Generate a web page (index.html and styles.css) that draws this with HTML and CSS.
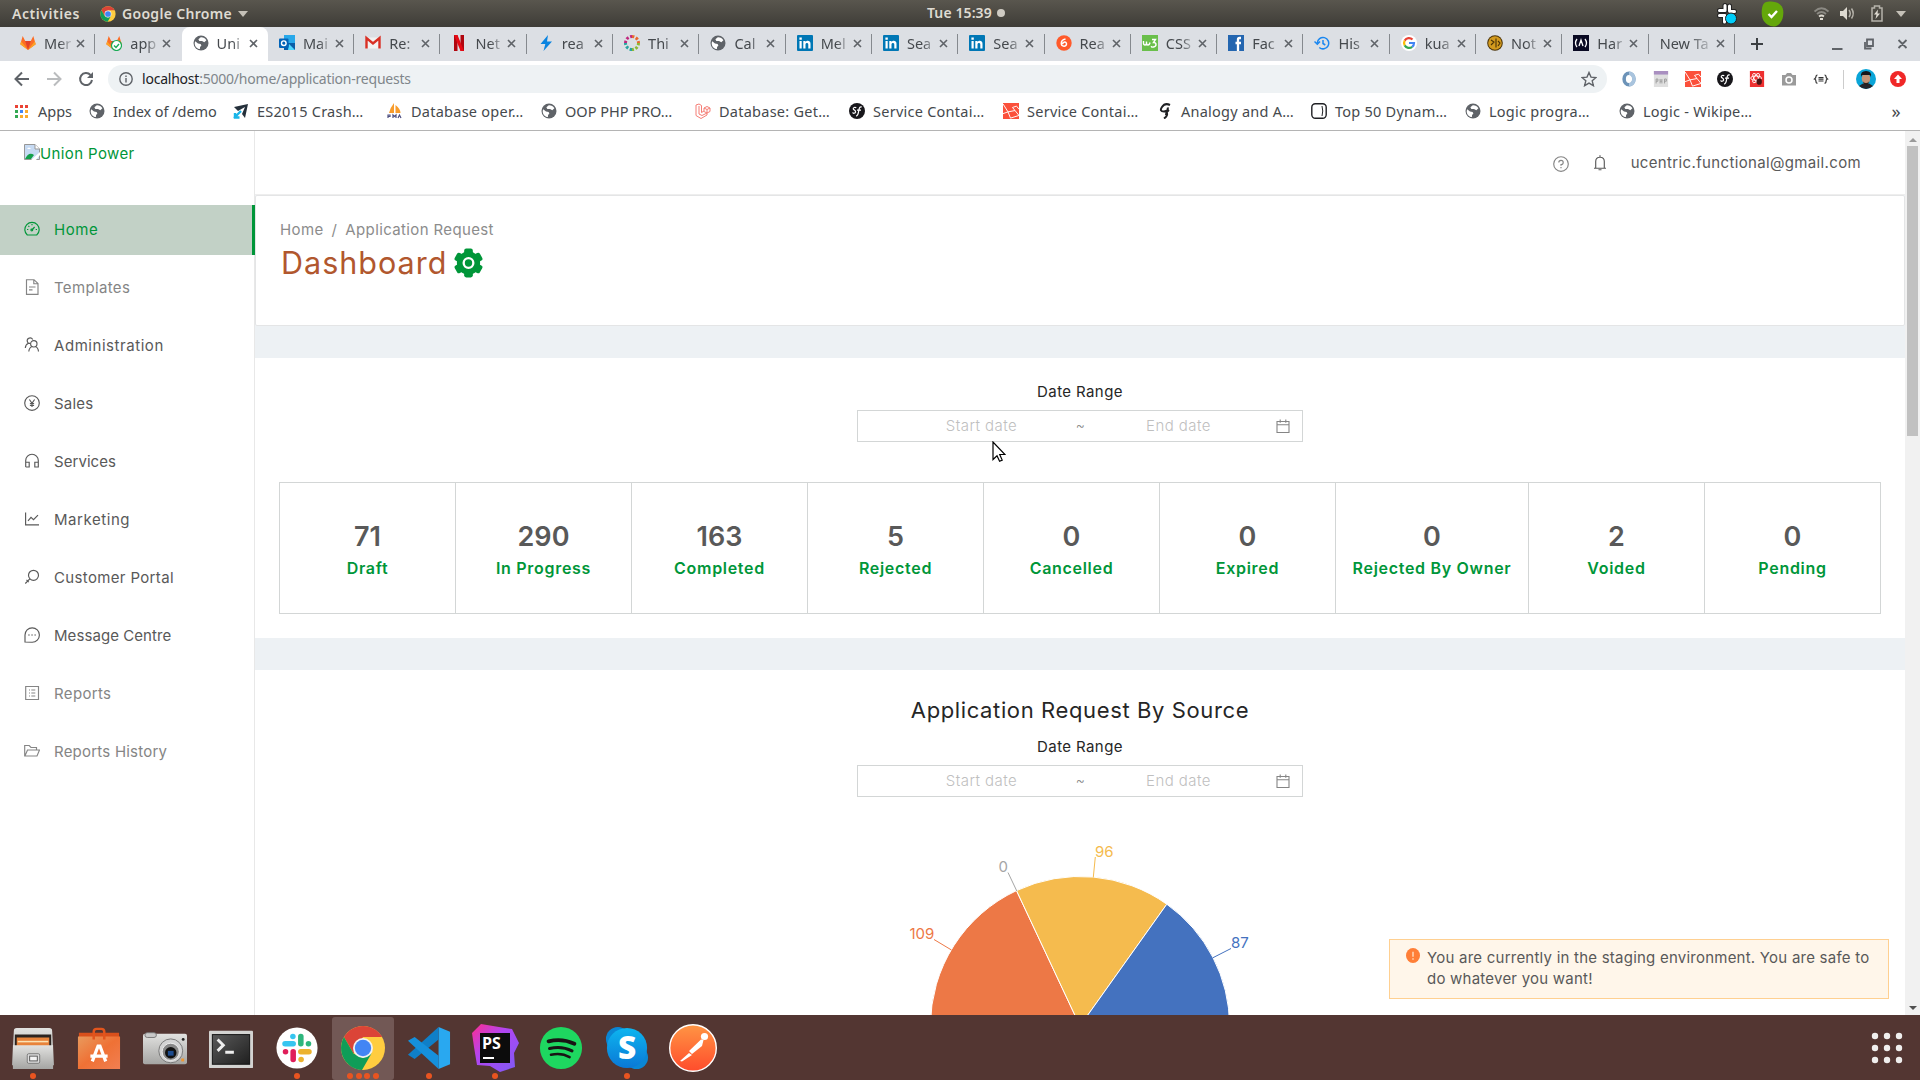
FILE: index.html
```
<!DOCTYPE html>
<html lang="en">
<head>
<meta charset="utf-8">
<title>Union Power</title>
<link rel="stylesheet" href="styles.css">
</head>
<body>
<svg class="defs" width="0" height="0">
  <defs>
    <linearGradient id="metal" x1="0" y1="0" x2="0" y2="1"><stop offset="0" stop-color="#e2e2e0"/><stop offset="1" stop-color="#a5a5a3"/></linearGradient>
    <linearGradient id="bagfill" x1="0" y1="0" x2="1" y2="1"><stop offset="0" stop-color="#e99a5d"/><stop offset=".5" stop-color="#ef7135"/><stop offset="1" stop-color="#f17f52"/></linearGradient>
    <linearGradient id="screen" x1="0" y1="0" x2="1" y2="1"><stop offset="0" stop-color="#5a5a5a"/><stop offset="1" stop-color="#1f1f1f"/></linearGradient>
    <linearGradient id="psfill" x1="0" y1="0" x2="1" y2="1"><stop offset="0" stop-color="#ff2d8f"/><stop offset=".4" stop-color="#b345f1"/><stop offset="1" stop-color="#7a5cf5"/></linearGradient>
    <linearGradient id="skypefill" x1="0" y1="0" x2="0" y2="1"><stop offset="0" stop-color="#0db5ef"/><stop offset="1" stop-color="#0a78d6"/></linearGradient>
    <linearGradient id="postfill" x1="0" y1="0" x2="0" y2="1"><stop offset="0" stop-color="#ff9544"/><stop offset="1" stop-color="#ff4c2c"/></linearGradient>
    <symbol id="globe" viewBox="0 0 16 16"><circle cx="8" cy="8" r="7.500" fill="#5f6368"/><path d="M2.200 6.300 5 8.600l2.600.3.800 1.600-1.300 1.600-.2 2C4 13.800 1.700 11.500 1.700 8zM7.800 2.300c2.500-.1 4.500 1 5.600 3L11.300 7.300 9 5.900 6.300 6 5.400 4.300z" fill="#fff"/></symbol>
    <symbol id="chrome" viewBox="0 0 46 46"><circle cx="23" cy="23" r="22" fill="#ffcd40"/><path d="M4 12A22 22 0 0 1 42.100 12H23L13.500 28.500z" fill="#db4437"/><path d="M4 12A22 22 0 0 0 22 45l9.500-16.500L23 33 13.500 28.500z" fill="#0f9d58"/><circle cx="23" cy="23" r="10" fill="#f1f1f1"/><circle cx="23" cy="23" r="8.200" fill="#4285f4"/></symbol>
    <symbol id="x" viewBox="0 0 9 9"><path d="M1 1l7 7M8 1 1 8" stroke="#5f6368" stroke-width="1.600"/></symbol>
    <symbol id="gitlab" viewBox="0 0 16 16"><path d="M8 15 .300 9.200 2.700 1l2.500 5h5.600l2.500-5 2.400 8.200z" fill="#fc6d26"/><path d="M8 15 5.200 6h5.600z" fill="#e24329"/><path d="M.300 9.200 1.200 6.200 8 15zM15.700 9.200l-.9-3L8 15z" fill="#fca326"/></symbol>
    <symbol id="linkedin" viewBox="0 0 16 16"><rect width="16" height="16" rx="1" fill="#0077b5"/><path d="M2.500 6h2.200v7.500H2.500zM2.400 2.500h2.400v2.200H2.400zM6.300 6h2.200v1c1.300-1.800 5-1.600 5 1.700v4.800h-2.200V9.400c0-2-2.800-2-2.800 0v4.100H6.300z" fill="#fff"/></symbol>
    <symbol id="sf" viewBox="0 0 16 16"><circle cx="8" cy="8" r="8" fill="#18171b"/><path d="M7.200 5c-1-1.400-3.400-.4-2.900 1 .4 1.200 2.400 1.200 2.300 2.900C6.500 10.500 4 10.800 3.600 9.400M7 13c2 .1 2.300-2.500 2.700-5S10.600 3.200 12.800 4M8 7.200h4" fill="none" stroke="#fff" stroke-width="1.200"/></symbol>
    <symbol id="laravel" viewBox="0 0 16 18" preserveAspectRatio="none"><rect width="16" height="18" fill="#fb503b"/><path d="M0 1 5 10l7-1.500L9.500 5l4-1.500L16 7M5 10l2.500 7 8.500-3-4-5.500M0 12l5-2" fill="none" stroke="#fff" stroke-width="1"/></symbol>
    <symbol id="calendar" viewBox="0 0 14 14"><path d="M1 2.500h12v11H1zM1 5.800h12M4.200.500v3.200M9.800.500v3.200" fill="none" stroke="#858585" stroke-width="1.100"/></symbol>
  </defs>
</svg>

<header class="topbar">
  <span class="activities">Activities</span>
  <svg class="tb-chrome" width="16" height="16"><use href="#chrome"/></svg>
  <span class="tb-app">Google Chrome</span>
  <i class="caret"></i>
  <span class="clock">Tue 15:39 <i class="clock-dot"></i></span>
  <div class="tray">
    <svg width="20" height="22" viewBox="0 0 20 22"><path d="M8 2.500v5M2.500 7.500H6M12.500 3v5M13 8.500h4.500M2.500 12.500H8M7.500 13v6" stroke="#222" stroke-width="5" stroke-linecap="round"/><path d="M8 2.500v5M2.500 7.500H6M12.500 3v5M13 8.500h4.500M2.500 12.500H8M7.500 13v6" stroke="#fff" stroke-width="3" stroke-linecap="round"/><circle cx="14" cy="15.500" r="5.500" fill="#00cdf9" stroke="#222"/></svg>
    <svg width="23" height="26" viewBox="0 0 23 26"><path d="M4 1.500c4-1.500 11-1.500 15 2s3.500 8 3 12-4 10-9 10-9-3-11-7S0 4 4 1.500z" fill="#64a70b"/><path d="M7.500 13l3 3 5.500-6" fill="none" stroke="#fff" stroke-width="2.400"/></svg>
    <svg width="15" height="15" viewBox="0 0 15 15" fill="none" stroke="#8b8983" stroke-width="1.800"><path d="M.500 5.500q7-6.500 14 0M3 8q4.500-4 9 0"/><path d="M5 10.500q2.500-2 5 0M6 13h3" stroke="#dfdbd2"/></svg>
    <svg width="16" height="15" viewBox="0 0 16 15"><path d="M0 5h3l4-4v13l-4-4H0z" fill="#dfdbd2"/><path d="M9 4q2.500 3.500 0 7M11.500 2.500q3.500 5 0 10" fill="none" stroke="#b5b2aa" stroke-width="1.500"/></svg>
    <svg width="12" height="17" viewBox="0 0 12 17"><path d="M1 3h2.500V1h5v2H11v13H1z" fill="none" stroke="#b5b2aa" stroke-width="1.500"/><path d="M7 4.500 3 9.500h2.500L4.500 14 9 8.500H6.500z" fill="#dfdbd2"/></svg>
    <i class="caret"></i>
  </div>
</header>

<nav class="tabs">
  <div class="tab"><svg class="fav"><use href="#gitlab"/></svg><span>Mer</span><svg class="close"><use href="#x"/></svg></div>
  <div class="tab nosep"><svg class="fav" viewBox="0 0 16 16"><use href="#gitlab"/><circle cx="10.500" cy="10.500" r="5" fill="#fff" stroke="#1aaa55" stroke-width="1.200"/><path d="M8 10.500l2 2 3-3.500" stroke="#1aaa55" stroke-width="1.400" fill="none"/></svg><span>app</span><svg class="close"><use href="#x"/></svg></div>
  <div class="tab active"><svg class="fav"><use href="#globe"/></svg><span>Uni</span><svg class="close"><use href="#x"/></svg></div>
  <div class="tab"><svg class="fav" viewBox="0 0 16 16"><path d="M5 0h11v15H5z" fill="#28a8ea"/><path d="M5 8h11v7H5z" fill="#0a5ea8"/><path d="m10 9 6 6H9z" fill="#50d9ff"/><rect y="3.500" width="9.500" height="9.500" rx="1" fill="#0364b8"/><circle cx="4.800" cy="8.200" r="2.300" fill="none" stroke="#fff" stroke-width="1.400"/></svg><span>Mai</span><svg class="close"><use href="#x"/></svg></div>
  <div class="tab"><svg class="fav" viewBox="0 0 16 16"><path d="M1 2.500h14v11H1z" fill="#f2f2f2"/><path d="M1.500 13.500V3L8 8.500 14.500 3v10.500" fill="none" stroke="#d93025" stroke-width="2.400"/></svg><span>Re:</span><svg class="close"><use href="#x"/></svg></div>
  <div class="tab"><svg class="fav" viewBox="0 0 16 16"><path d="M3 0h3.500v16H3zM9.500 0H13v16H9.500z" fill="#b1060f"/><path d="M3 0h3.500L13 16H9.500z" fill="#e50914"/></svg><span>Net</span><svg class="close"><use href="#x"/></svg></div>
  <div class="tab"><svg class="fav" viewBox="0 0 16 16"><path d="M10 0 2.500 9h4.800L5.500 16 14 6.500H9z" fill="#0a84e0"/></svg><span>rea</span><svg class="close"><use href="#x"/></svg></div>
  <div class="tab"><svg class="fav" viewBox="0 0 16 16" fill="none" stroke-width="3"><path d="M8 1.500A6.500 6.500 0 0 1 14.500 8" stroke="#e8682c" stroke-dasharray="2.400 1.600"/><path d="M14.500 8A6.500 6.500 0 0 1 8 14.500" stroke="#8ab933" stroke-dasharray="2.400 1.600"/><path d="M8 14.500A6.500 6.500 0 0 1 1.500 8" stroke="#27a5a0" stroke-dasharray="2.400 1.600"/><path d="M1.500 8A6.500 6.500 0 0 1 8 1.500" stroke="#c0267e" stroke-dasharray="2.400 1.600"/></svg><span>Thi</span><svg class="close"><use href="#x"/></svg></div>
  <div class="tab"><svg class="fav"><use href="#globe"/></svg><span>Cal</span><svg class="close"><use href="#x"/></svg></div>
  <div class="tab"><svg class="fav"><use href="#linkedin"/></svg><span>Mel</span><svg class="close"><use href="#x"/></svg></div>
  <div class="tab"><svg class="fav"><use href="#linkedin"/></svg><span>Sea</span><svg class="close"><use href="#x"/></svg></div>
  <div class="tab"><svg class="fav"><use href="#linkedin"/></svg><span>Sea</span><svg class="close"><use href="#x"/></svg></div>
  <div class="tab"><svg class="fav" viewBox="0 0 16 16"><circle cx="8" cy="8" r="7.700" fill="#ff5a2b"/><path d="M9.500 4Q5 5 5.300 8.500C5.500 12 10.500 12 10.500 9S7 6.800 6.500 9" fill="none" stroke="#fff" stroke-width="1.500"/></svg><span>Rea</span><svg class="close"><use href="#x"/></svg></div>
  <div class="tab"><svg class="fav" viewBox="0 0 16 16"><path d="M0 0h16v16H0z" fill="#6abf4b"/><path d="M1.500 6v2q0 2 1.500 2t1.500-2V6.500M4.500 8q0 2 1.500 2t2-2.500M10 4.500h3.500L11.500 7.500q2.500 0 2.500 2T11.500 12 9.500 11" fill="none" stroke="#fff" stroke-width="1.400"/></svg><span>CSS</span><svg class="close"><use href="#x"/></svg></div>
  <div class="tab"><svg class="fav" viewBox="0 0 16 16"><path d="M0 0h16v16H0z" fill="#2466b0"/><path d="M13 3h-1.500Q10 3 10 4.500V16M7.500 8H13" fill="none" stroke="#fff" stroke-width="2.300"/></svg><span>Fac</span><svg class="close"><use href="#x"/></svg></div>
  <div class="tab"><svg class="fav" viewBox="0 0 16 16" fill="none" stroke="#1a87f0" stroke-width="1.500"><path d="M3.300 8a5.700 5.700 0 1 1 2 4.500M.500 6.500 3.300 9.300 6 6.500M9 5v3.500l2.300 1.500"/></svg><span>His</span><svg class="close"><use href="#x"/></svg></div>
  <div class="tab"><svg class="fav" viewBox="0 0 16 16"><circle cx="8" cy="8" r="8" fill="#fff"/><g fill="none" stroke-width="2.200"><path d="M11.500 4.500A5 5 0 0 0 3.700 5.600" stroke="#ea4335"/><path d="M3.700 5.600a5 5 0 0 0 0 4.800" stroke="#fbbc05"/><path d="M3.700 10.400a5 5 0 0 0 7.500 1.400" stroke="#34a853"/><path d="M11.200 11.800A5 5 0 0 0 13 8H8" stroke="#4285f4"/></g></svg><span>kua</span><svg class="close"><use href="#x"/></svg></div>
  <div class="tab"><svg class="fav" viewBox="0 0 16 16"><circle cx="8" cy="8" r="7.800" fill="#4a3208"/><circle cx="8" cy="8" r="6.800" fill="#d39a1e"/><path d="M4 5l3 2-3 3M9 3.500v9M11 6l2 2-2 3" fill="none" stroke="#4a3208" stroke-width="1.100"/></svg><span>Not</span><svg class="close"><use href="#x"/></svg></div>
  <div class="tab"><svg class="fav" viewBox="0 0 16 16"><path d="M0 0h16v16H0z" fill="#0a0a23"/><path d="M4 4q-3 4 0 8M12 4q3 4 0 8M6 11l2-6 2 6" fill="none" stroke="#fff" stroke-width="1.300"/></svg><span>Har</span><svg class="close"><use href="#x"/></svg></div>
  <div class="tab wide"><span>New Ta</span><svg class="close"><use href="#x"/></svg></div>
  <svg class="newtab" width="12" height="12" viewBox="0 0 12 12"><path d="M6 0v12M0 6h12" stroke="#3c4043" stroke-width="2"/></svg>
  <svg class="winctl" width="78" height="16" viewBox="0 0 78 16" fill="none" stroke="#5f6368" stroke-width="1.800"><path d="M1 13h10.500M36 3.500h6v6.500h-6zM34 6v6.500h6.500M67.500 4l8 8M75.500 4l-8 8"/></svg>
</nav>

<div class="toolbar">
  <svg width="80" height="20" viewBox="0 0 80 20" fill="none" stroke="#5f6368" stroke-width="2"><path d="M15 10H2M8 3.500 1.500 10 8 16.500"/><path d="M33 10h13M40 3.500 46.500 10 40 16.500" stroke="#babcbe"/><path d="M76.500 6A6 6 0 1 0 78 11"/><path d="M79 3v6h-6z" fill="#5f6368" stroke="none"/></svg>
  <div class="omnibox">
    <svg width="14" height="14" viewBox="0 0 14 14" fill="none" stroke="#5f6368" stroke-width="1.400"><circle cx="7" cy="7" r="6.200"/><path d="M7 6v4.500M7 3.500V5"/></svg>
    <span class="url"><b>localhost</b>:5000/home/application-requests</span>
    <svg class="star" width="16" height="16" viewBox="0 0 16 16"><path d="m8 1.500 2 4.600 5 .4-3.800 3.300 1.200 4.900L8 12.100l-4.400 2.600 1.200-4.900L1 6.500l5-.4z" fill="none" stroke="#5f6368" stroke-width="1.400"/></svg>
  </div>
  <div class="exts">
    <svg viewBox="0 0 16 18"><ellipse cx="8" cy="9" rx="5.500" ry="6.500" fill="none" stroke="#6c93b8" stroke-width="4"/><path d="M8 2.500A5.500 6.500 0 0 1 8 15.500" fill="none" stroke="#a9c4de" stroke-width="4"/></svg>
    <svg viewBox="0 0 16 18"><path d="M0 0h16v18H0z" fill="#dfdfdf"/><path d="M0 0h16v4H0z" fill="#a98fc0"/><path d="M2.500 14V9h2v2.500h-2M7 9v5M9 9v5M7 11.500h2M12 14V9h2v2.500h-2" fill="none" stroke="#999"/></svg>
    <svg><use href="#laravel"/></svg>
    <svg><use href="#sf"/></svg>
    <svg viewBox="0 0 16 18"><path d="M0 0h16v18H0z" fill="#ee3030"/><g fill="none" stroke="#fff"><ellipse cx="7" cy="8" rx="6" ry="2.400"/><ellipse cx="7" cy="8" rx="6" ry="2.400" transform="rotate(60 7 8)"/><ellipse cx="7" cy="8" rx="6" ry="2.400" transform="rotate(120 7 8)"/></g><ellipse cx="10.500" cy="12" rx="3" ry="3.500" fill="#4a1515"/></svg>
    <svg viewBox="0 0 16 16"><path d="M1 4h3.500L6 2h4l1.500 2H15v10.500H1z" fill="#9a9a9a"/><circle cx="8" cy="9" r="3" fill="none" stroke="#fff" stroke-width="1.500"/></svg>
    <svg viewBox="0 0 16 16"><path d="M4.500 4Q3 4 3 5.500T1.500 8Q3 8.500 3 10.500T4.500 12M11.500 4Q13 4 13 5.500T14.500 8Q13 8.500 13 10.500T11.500 12M5.500 6.500h5M5.500 8.200h5M5.500 10h5" fill="none" stroke="#333" stroke-width="1.200"/></svg>
  </div>
  <i class="tb-sep"></i>
  <svg class="avatar" width="20" height="20" viewBox="0 0 20 20"><circle cx="10" cy="10" r="10" fill="#0aa5d8"/><path d="M3 17q7-6 14 0-7 6-14 0z" fill="#23252b"/><ellipse cx="10" cy="9.500" rx="4.200" ry="5.300" fill="#c69577"/><path d="M5 8q-1-6 5-6t5 6L14 6H6z" fill="#17171a"/><path d="M7 12.500q3 3 6 0-1 3.500-3 3.500t-3-3.500z" fill="#2b211d"/></svg>
  <svg class="update" width="16" height="16" viewBox="0 0 16 16"><circle cx="8" cy="8" r="8" fill="#f02828"/><path d="m8 3.500 4 4.500H9.500v4h-3V8H4z" fill="#fff"/></svg>
</div>

<div class="bookmarks">
  <a class="apps"><svg viewBox="0 0 13 13"><path d="M0 0h3v3H0zM5 0h3v3H5zM10 0h3v3h-3z" fill="#ea4335"/><path d="M0 5h3v3H0zM0 10h3v3H0z" fill="#34a853"/><path d="M5 5h3v3H5z" fill="#4285f4"/><path d="M10 5h3v3h-3zM5 10h3v3H5zM10 10h3v3h-3z" fill="#fbab2b"/></svg>Apps</a>
  <a class="bm2"><svg><use href="#globe"/></svg>Index of /demo</a>
  <a class="bm3"><svg viewBox="0 0 16 16"><path d="M1 4 15 1l-3 14-3-4 3-7-7 4z" fill="#25303b"/><path d="M1 15l7-7M2 10v4.500h4.500" stroke="#19b5e8" stroke-width="2.400" fill="none"/></svg>ES2015 Crash…</a>
  <a class="bm4"><svg viewBox="0 0 16 16"><path d="M7 0Q3 5 2 10h5zM8.500 2q5 4 5 8h-5z" fill="#f89c2c"/><path d="M1 15v-3h2v1.500H1M6 15v-3l1.500 1.500L9 12v3M11 15l1.500-3 1.500 3" stroke="#4d4f80" stroke-width="1.200" fill="none"/></svg>Database oper…</a>
  <a class="bm5"><svg><use href="#globe"/></svg>OOP PHP PRO…</a>
  <a class="bm6"><svg viewBox="0 0 16 16"><path d="M1 2l3-1 2.500 1.500v7L9 8V5l3-1.500L15 5v3.500l-3 1.500v2l-6 3.500-5-3zM4 3v8l3 1.500M9 5l3 1.500L15 5M12 6.500V10L9 8.500M7 12.500l5-2.500" fill="none" stroke="#f57d75"/></svg>Database: Get…</a>
  <a class="bm7"><svg><use href="#sf"/></svg>Service Contai…</a>
  <a class="bm8"><svg><use href="#laravel"/></svg>Service Contai…</a>
  <a class="bm9"><svg viewBox="0 0 16 16"><path d="M13 2Q8-.5 5 4T7 8.500Q12 8 10.500 4.500M9 8.500Q12 12 7 15.500M12 7Q9 9 9 12" fill="none" stroke="#202124" stroke-width="2"/></svg>Analogy and A…</a>
  <a class="bm10"><svg viewBox="0 0 16 16"><rect x=".800" y=".800" width="14.400" height="14.400" rx="3.500" fill="none" stroke="#202124" stroke-width="1.400"/><path d="M11 3q1.500 5 0 10" fill="none" stroke="#202124"/></svg>Top 50 Dynam…</a>
  <a class="bm11"><svg><use href="#globe"/></svg>Logic progra…</a>
  <a class="bm12"><svg><use href="#globe"/></svg>Logic - Wikipe…</a>
  <span class="more">»</span>
</div>

<div class="page">
  <aside class="sidebar">
    <div class="logo"><svg width="16" height="16" viewBox="0 0 16 16"><path d="M.500.500h10.500l4.500 4.500v10.500H.500z" fill="#c6daf3" stroke="#979797"/><path d="M11 .500v4.500h4.500" fill="#fff" stroke="#979797"/><path d="M1 15q4-8 9-4l-3 4z" fill="#13a04b"/><path d="M3 5q2-3 4 0z" fill="#fff"/><path d="M7 16l9-8v3l-4 5z" fill="#fff"/></svg>Union Power</div>
    <a class="item on"><svg viewBox="0 0 16 16"><path d="M3.300 14a7.200 7.200 0 1 1 9.400 0zM8 9l2.600-3M3 8.500h1.300M11.700 8.500H13M8 3v1.300M4.400 4.900l.9.900"/><circle cx="7.800" cy="9" r=".900"/></svg><span class="w1">Home</span></a>
    <a class="item dim"><svg viewBox="0 0 16 16"><path d="M2.500.700h7.500L14 4.600v10.700H2.500zM9.800.700v4H14M5 8h6.500M5 10.800h3.500"/></svg><span class="w2">Templates</span></a>
    <a class="item"><svg viewBox="0 0 16 16"><circle cx="9.800" cy="6.800" r="3.200"/><path d="M4.800 14.500q.4-4 3.400-5M11.300 9.500q2.800 1 3.200 5M8.800 2.500Q7-.3 4.200 1.500 2 4 4.500 6.300 1.500 7.500 1.300 11M4.500 6.300h1.500"/></svg><span class="w3">Administration</span></a>
    <a class="item"><svg viewBox="0 0 16 16"><circle cx="8" cy="8" r="7.300"/><path d="M5.400 4.500 8 8.300l2.600-3.800M8 8.300V12M5.900 8.500h4.200M5.900 10.300h4.200"/></svg><span class="w4">Sales</span></a>
    <a class="item"><svg viewBox="0 0 16 16"><path d="M1.700 14V7.500a6.300 6.300 0 0 1 12.600 0V14h-3.500V9.200h3.500M1.700 9.200h3.500V14H1.700"/></svg><span class="w5">Services</span></a>
    <a class="item"><svg viewBox="0 0 16 16"><path d="M1.600 1.500v12.300H15M4 9.800l3-3.400 2.500 2.300L14 4.200"/></svg><span class="w6">Marketing</span></a>
    <a class="item"><svg viewBox="0 0 16 16"><circle cx="9.500" cy="6.300" r="5"/><path d="M5.800 9.800 1.300 14.500M2.500 10.800l2.300 2.300"/></svg><span class="w7">Customer Portal</span></a>
    <a class="item"><svg viewBox="0 0 16 16"><path d="M1 15V8a7.200 7.200 0 1 1 7.200 7.200zM4.200 8h1.500M7.300 8h1.500M10.400 8h1.500"/></svg><span class="w8">Message Centre</span></a>
    <a class="item dim"><svg viewBox="0 0 16 16"><path d="M1.700 1.500h12.800V14.500H1.700zM5 5h1M7.300 5h4M5 8h1M7.300 8h4M5 11h1M7.300 11h4"/></svg><span class="w9">Reports</span></a>
    <a class="item dim"><svg viewBox="0 0 16 16"><path d="M.700 13V2.500h4.500L7 4.500h5.500V7M.900 13 3.500 7h12L13 13z"/></svg><span class="w10">Reports History</span></a>
  </aside>

  <main class="main">
    <div class="userbar">
      <svg class="help" viewBox="0 0 16 16"><circle cx="8" cy="8" r="7.300"/><path d="M5.800 6.500Q5.800 4.400 8 4.400t2.200 2T8 8.600V9.800M8 11v1.300"/></svg>
      <svg class="bell" viewBox="0 0 14 16"><path d="M1 13.200h12M2.700 13V6.500q0-4.300 4.300-4.300t4.300 4.300V13M7 2V.300M5.500 14.700h3"/></svg>
      <span>ucentric.functional@gmail.com</span>
    </div>
    <section class="pagehead">
      <div class="crumbs"><span>Home</span><i>/</i><span>Application Request</span></div>
      <h1><span>Dashboard</span><svg width="29" height="30" viewBox="-15 -15 30 30"><g fill="#009639"><circle r="12"/><rect x="-4.500" y="-15" width="9" height="30" rx="2.200"/><rect x="-4.500" y="-15" width="9" height="30" rx="2.200" transform="rotate(60)"/><rect x="-4.500" y="-15" width="9" height="30" rx="2.200" transform="rotate(120)"/></g><circle r="5" fill="none" stroke="#fff" stroke-width="2.400"/></svg></h1>
    </section>
    <section class="panel first">
      <div class="label">Date Range</div>
      <div class="picker"><span class="ph">Start date</span><span class="tilde">~</span><span class="ph">End date</span><svg width="14" height="14"><use href="#calendar"/></svg></div>
      <div class="stats">
        <div><strong>71</strong><span>Draft</span></div>
        <div><strong>290</strong><span>In Progress</span></div>
        <div><strong>163</strong><span>Completed</span></div>
        <div><strong>5</strong><span>Rejected</span></div>
        <div><strong>0</strong><span>Cancelled</span></div>
        <div><strong>0</strong><span>Expired</span></div>
        <div><strong>0</strong><span>Rejected By Owner</span></div>
        <div><strong>2</strong><span>Voided</span></div>
        <div><strong>0</strong><span>Pending</span></div>
      </div>
    </section>
    <section class="panel second">
      <h2>Application Request By Source</h2>
      <div class="label">Date Range</div>
      <div class="picker"><span class="ph">Start date</span><span class="tilde">~</span><span class="ph">End date</span><svg width="14" height="14"><use href="#calendar"/></svg></div>
      <svg class="pie" width="400" height="175" viewBox="880 840 400 175">
        <g stroke="#fff" stroke-width="1">
          <path d="M1080 1026 1016.500 890.600A149.600 149.600 0 0 0 930.400 1026z" fill="#ed7846"/>
          <path d="M1080 1026 1016.500 890.600A149.600 149.600 0 0 1 1166.800 904.200z" fill="#f5bb4e"/>
          <path d="M1080 1026 1166.800 904.200A149.600 149.600 0 0 1 1229.600 1026z" fill="#4472bf"/>
        </g>
        <g fill="none">
          <path d="M1093.300 877.300 1095.300 857" stroke="#f5bb4e"/>
          <path d="M1016.800 891 1008 872.500" stroke="#a5a5a5"/>
          <path d="M951.500 950 934 939.500" stroke="#ed7846"/>
          <path d="M1213 957.700 1231 948.500" stroke="#4472bf"/>
        </g>
        <text x="1095" y="857" fill="#f5bb4e">96</text>
        <text x="998.500" y="872" fill="#a5a5a5">0</text>
        <text x="909.500" y="939" fill="#ed7846">109</text>
        <text x="1231" y="948" fill="#4472bf">87</text>
      </svg>
    </section>
    <div class="alert">
      <svg width="14" height="15" viewBox="0 0 14 14" preserveAspectRatio="none"><circle cx="7" cy="7" r="7" fill="#ff7f37"/><path d="M7 3.500v4.700M7 9.500v1.400" stroke="#ffe6cc" stroke-width="1.300"/></svg>
      <p>You are currently in the staging environment. You are safe to<br>do whatever you want!</p>
    </div>
    <svg class="cursor" width="14" height="22" viewBox="0 0 14 22"><path d="M1 1v17.500l4-3.800 2.600 5.600 2.600-1.200L7.700 13.500H13z" fill="#fff" stroke="#000" stroke-width="1.200"/></svg>
  </main>
  <div class="scroll"><i class="up"></i><div class="thumb"></div><i class="down"></i></div>
</div>

<footer class="dock">
  <div class="app run"><svg viewBox="0 0 46 46"><path d="M3 5q0-3 3-3h34q3 0 3 3l2 36H1z" fill="url(#metal)"/><path d="M4 9h38v12H4z" fill="#2c2420"/><path d="M6 12h34v9H6z" fill="#e8833a"/><path d="M7 15.500h32v1.600H7z" fill="#fbe3b5"/><path d="M2 20h42v25H2z" fill="url(#metal)"/><rect x="17" y="29" width="13" height="10" rx="1.500" fill="#ddd" stroke="#777"/><rect x="19.500" y="31.500" width="8" height="5" fill="#f4f4f4" stroke="#555"/></svg></div>
  <div class="app"><svg viewBox="0 0 46 46"><path d="M2 7h42v38H2z" fill="#d9501c"/><path d="M1 11h44v34H1z" fill="url(#bagfill)"/><path d="M17.500 14V6q0-3 3-3h5q3 0 3 3v8" fill="none" stroke="#e2551d" stroke-width="2.600"/><path d="M16 37 22 21h2l6 16M14 31.500h18" fill="none" stroke="#fff" stroke-width="3.400"/></svg></div>
  <div class="app"><svg viewBox="0 0 46 46"><rect x="0" y="8" width="46" height="32" rx="2" fill="url(#metal)"/><rect x="2" y="7" width="12" height="5" rx="2.500" fill="#c9c9c9" stroke="#777"/><circle cx="29" cy="26" r="12.500" fill="#d4d4d4" stroke="#777"/><circle cx="29" cy="27" r="9" fill="#888" stroke="#eee"/><circle cx="29" cy="28" r="6" fill="#111"/><rect x="26" y="26" width="6" height="5" fill="#1d4c8f"/><circle cx="42" cy="14" r="1.500" fill="#222"/><path d="M40 34h3v3h-3z" fill="#f0962e"/></svg></div>
  <div class="app"><svg viewBox="0 0 46 46"><rect x="0" y="5" width="46" height="39" rx="1" fill="#d3d3d1"/><rect x="3.500" y="9" width="39" height="31" fill="url(#screen)" stroke="#111"/><path d="M9 14l6 6-6 6M17 27.500h9" fill="none" stroke="#eee" stroke-width="3"/></svg></div>
  <div class="app run"><svg viewBox="0 0 46 46"><circle cx="23" cy="23" r="21.500" fill="#fff"/><g stroke-width="5.800" stroke-linecap="round" fill="none"><path d="M19 18.500h-8.500" stroke="#36c5f0"/><path d="M27 18.500V11" stroke="#2eb67d"/><path d="M27 27h8.500" stroke="#ecb22e"/><path d="M19 27v8" stroke="#e01e5a"/></g><circle cx="18.700" cy="11" r="2.900" fill="#36c5f0"/><circle cx="35" cy="18.500" r="2.900" fill="#2eb67d"/><circle cx="27.300" cy="35" r="2.900" fill="#ecb22e"/><circle cx="11" cy="27" r="2.900" fill="#e01e5a"/></svg></div>
  <div class="app current"><svg><use href="#chrome"/></svg><i></i><i></i><i></i><i></i></div>
  <div class="app run"><svg viewBox="0 0 46 46"><path d="M33 1 45 6v34l-12 5z" fill="#29a8f0"/><path d="M33 1v13L8 34.500 1 30z" fill="#0f7fc8"/><path d="M1 15.500l7-4L33 31v14z" fill="#1590dc"/></svg></div>
  <div class="app run"><svg class="large" viewBox="-1 -1 48 48"><path d="M0 8 9-1l18 3 13 2 7 14-5 10 1 14-15 5-10-6-13-1L2 22z" fill="url(#psfill)"/><path d="M8 8h30v30H8z" fill="#0c0c0c"/><path d="M11 33h11" stroke="#fff" stroke-width="2"/><text class="ps" x="10" y="24">PS</text></svg></div>
  <div class="app"><svg viewBox="0 0 46 46"><circle cx="23" cy="23" r="22" fill="#1ed760"/><g fill="none" stroke="#191414" stroke-linecap="round"><path d="M10 16q14-3.500 27 2.500" stroke-width="4"/><path d="M11 23.500q13-3 23.500 2.500" stroke-width="3.200"/><path d="M12.500 30q11-2.500 19.500 2.500" stroke-width="2.600"/></g></svg></div>
  <div class="app run"><svg viewBox="0 0 46 46"><circle cx="13.500" cy="13.500" r="12.500" fill="#0a86d4"/><circle cx="33" cy="33" r="12" fill="#0a86d4"/><circle cx="23" cy="23" r="21" fill="url(#skypefill)"/><text class="sk" x="23" y="35">S</text></svg></div>
  <div class="app"><svg class="large" viewBox="0 0 48 48"><circle cx="24" cy="24" r="23.300" fill="url(#postfill)" stroke="#fff" stroke-width="1.400"/><circle cx="35.500" cy="12.500" r="3.600" fill="#fff"/><path d="M32 15.500 20 27l3 3 10-8 1.500-6zM20 29l-9 8 2 .5 10-6.500z" fill="#fff"/></svg></div>
  <svg class="grid" width="32" height="32" viewBox="0 0 32 32" fill="#f0efee"><circle cx="4" cy="4" r="3.200"/><circle cx="16" cy="4" r="3.200"/><circle cx="28" cy="4" r="3.200"/><circle cx="4" cy="16" r="3.200"/><circle cx="16" cy="16" r="3.200"/><circle cx="28" cy="16" r="3.200"/><circle cx="4" cy="28" r="3.200"/><circle cx="16" cy="28" r="3.200"/><circle cx="28" cy="28" r="3.200"/></svg>
</footer>
</body>
</html>
```
FILE: styles.css
```
* { box-sizing: border-box; }
body { margin: 0; width: 1920px; height: 1080px; overflow: hidden; display: flex; flex-direction: column; background: #fff; font-family: "Inter", sans-serif; color: #595959; }
.defs { position: absolute; }
svg { flex: none; display: block; }

/* desktop top bar */
.topbar { position: relative; height: 27px; flex: none; display: flex; align-items: center; padding: 0 14px 0 12px; background: linear-gradient(#59564e, #3e3c37); color: #dfdbd2; font: 600 14px/27px "Noto Sans", sans-serif; }
.activities { letter-spacing: .55px; width: 88px; }
.tb-chrome { margin-right: 6px; }
.tb-app { letter-spacing: .31px; }
.caret { border: 5px solid transparent; border-top: 6px solid #c5c1b8; border-bottom: 0; margin-left: 6px; }
.clock { position: absolute; left: 927px; top: -1px; display: flex; align-items: center; gap: 5px; letter-spacing: .1px; }
.clock-dot { width: 8px; height: 8px; border-radius: 50%; background: #cfcbc3; }
.tray { margin-left: auto; display: flex; align-items: center; }
.tray svg:nth-child(2) { margin-left: 24px; }
.tray svg:nth-child(3) { margin-left: 30px; }
.tray svg:nth-child(4) { margin-left: 11px; }
.tray svg:nth-child(5) { margin-left: 15px; }
.tray .caret { margin-left: 13px; }

/* browser tabs */
.tabs { position: relative; height: 34px; flex: none; display: flex; background: #dcdfe4; padding-left: 9px; font: 14.5px/32px "Noto Sans", sans-serif; color: #45494d; }
.tab { position: relative; width: 86.3px; flex: none; display: flex; align-items: center; padding: 0 0 2px 11px; }
.tab::after { content: ""; position: absolute; right: 0; top: 7px; width: 1px; height: 20px; background: #85898e; }
.tab.nosep::after, .tab.active::after { display: none; }
.tab.active { background: #fff; border-radius: 8px 8px 0 0; }
.tab .fav { width: 16px; height: 16px; margin-right: 8px; }
.tab span { width: 28px; overflow: hidden; white-space: nowrap; -webkit-mask-image: linear-gradient(90deg, #000 55%, rgba(0, 0, 0, .15)); mask-image: linear-gradient(90deg, #000 55%, rgba(0, 0, 0, .15)); }
.tab .close { width: 9px; height: 9px; margin-left: 4px; }
.tab.wide span { width: 52px; }
.newtab { margin: 11px 0 0 16px; }
.winctl { margin: 9px 11px 0 auto; }

/* address bar */
.toolbar { height: 34px; flex: none; display: flex; align-items: center; padding: 2px 14px 0 14px; }
.omnibox { width: 1500px; height: 28px; margin-left: 14px; border-radius: 14px; background: #eef2f4; display: flex; align-items: center; padding: 0 10px 0 11px; }
.url { margin-left: 9px; font: 14px/28px "Noto Sans", sans-serif; letter-spacing: -.22px; color: #80868b; }
.url b { font-weight: 400; color: #202124; }
.star { margin-left: auto; }
.exts { display: flex; gap: 16px; margin-left: 14px; }
.exts svg { width: 16px; height: 16px; }
.tb-sep { width: 1px; height: 19px; background: #ccc; margin: 0 12px 0 14px; }
.update { margin-left: 14px; }

/* bookmarks */
.bookmarks { height: 36px; flex: none; position: relative; display: flex; align-items: center; border-bottom: 1px solid #b4b4b4; padding: 0 19px 3px 15px; font: 14.5px/30px "Noto Sans", sans-serif; letter-spacing: .25px; color: #45494d; white-space: nowrap; }
.bookmarks a { display: flex; align-items: center; gap: 8px; flex: none; width: 154px; }
.bookmarks a svg { width: 16px; height: 16px; }
.bookmarks .apps { width: 74px; gap: 10px; letter-spacing: 0; }
.bookmarks .apps svg { width: 13px; height: 13px; }
.bookmarks .bm2 { width: 144px; letter-spacing: -.05px; }
.bookmarks .bm5 { letter-spacing: 0; }
.bookmarks .more { margin-left: auto; font-size: 18px; }

/* application */
.page { flex: 1; min-height: 0; display: flex; overflow: hidden; }
.sidebar { width: 255px; flex: none; border-right: 1px solid #e8e8e8; font-size: 15px; }
.logo { height: 74px; padding: 12px 0 0 24px; display: flex; color: #009639; line-height: 21px; letter-spacing: .38px; }
.logo svg { margin-top: 1px; }
.item { display: flex; align-items: center; height: 50px; margin-bottom: 8px; padding-left: 24px; }
.item svg { width: 16px; height: 16px; margin-right: 14px; position: relative; top: -1px; }
.item svg, .userbar svg { fill: none; stroke: currentColor; stroke-width: 1.150; }
.item span { padding-bottom: 1.5px; }
.item.on { background: #c2d1c6; color: #009639; border-right: 3px solid #009639; margin-right: -1px; }
.item.dim { color: #858585; }
.w1, .w6 { letter-spacing: .55px; }
.w2, .w9, .w7 { letter-spacing: .35px; }
.w3 { letter-spacing: .55px; }
.w4 { letter-spacing: .2px; }
.w5 { letter-spacing: .05px; }
.w8 { letter-spacing: .07px; }
.w10 { letter-spacing: .22px; }

.main { position: relative; width: 1650px; flex: none; overflow: hidden; background: #edf1f4; }
.userbar { height: 64px; background: #fff; display: flex; align-items: center; justify-content: flex-end; padding-right: 44px; font-size: 15px; letter-spacing: .35px; border-bottom: 1px solid #eee; }
.help { width: 16px; height: 16px; margin-right: 24px; color: #858585; position: relative; top: 1px; }
.bell { width: 14px; height: 16px; margin-right: 24px; }
.pagehead { height: 131px; background: #fff; border: 1px solid #e4e5e6; border-radius: 2px; padding: 22px 0 0 24px; }
.crumbs { font-size: 15px; line-height: 24px; color: #8c8c8c; display: flex; letter-spacing: .37px; }
.crumbs i { font-style: normal; margin: 0 8px; }
h1 { margin: 2px 0 0 1px; display: flex; align-items: center; gap: 8px; font-size: 30.5px; font-weight: 400; line-height: 38px; color: #b1572e; letter-spacing: 1px; }
h1 span { margin-right: -1px; }
.panel { background: #fff; display: flex; flex-direction: column; align-items: center; color: #262626; }
.first { margin-top: 32px; height: 280px; padding-top: 23px; }
.label { font-size: 15px; line-height: 22px; letter-spacing: .4px; }
.picker { width: 446px; height: 32px; margin-top: 7px; border: 1px solid #d3d6d6; display: grid; grid-template-columns: 179px 19px 177px 14px; align-items: center; padding: 0 0 1px 34px; text-align: center; font-size: 15px; font-weight: 300; letter-spacing: .45px; color: #bfbfbf; }
.picker .tilde { color: #858585; font-size: 14px; position: relative; top: -1px; }
.picker svg { margin: 1px 0 0 9px; }
.stats { width: 1602px; height: 132px; margin: 40px 0 0; display: grid; grid-template-columns: 176px repeat(5, 176px) 193px 176px 1fr; border: 1px solid #d3d6d6; border-right: 0; }
.stats div { border-right: 1px solid #d3d6d6; display: flex; flex-direction: column; align-items: center; padding-top: 38px; font-weight: 600; line-height: 32px; }
.stats strong { font-size: 27px; font-weight: 600; color: #595959; }
.stats span { margin-top: -1px; font-size: 16px; color: #009639; letter-spacing: .7px; }
.second { margin-top: 32px; height: 400px; padding-top: 24px; }
h2 { margin: 0 0 10px; font-size: 22px; line-height: 32px; font-weight: 400; letter-spacing: .62px; }
.pie { margin-top: 43px; font-size: 15px; }
.alert { position: absolute; left: 1134px; top: 808px; width: 500px; height: 60px; background: #fff6ea; border: 1px solid #ffd091; display: flex; padding: 8px 0 0 16px; }
.alert p { margin: -1px 0 0 7px; font-size: 15px; line-height: 21px; letter-spacing: .23px; white-space: nowrap; color: #595959; }
.cursor { position: absolute; left: 737px; top: 310px; }
.scroll { width: 15px; background: #f1f1f1; display: flex; flex-direction: column; align-items: center; padding: 7px 0 5px; }
.thumb { width: 11px; height: 290px; background: #c1c1c1; margin-top: 4px; }
.up { border: 4px solid transparent; border-bottom: 4px solid #9a9a9a; border-top: 0; }
.down { border: 4px solid transparent; border-top: 4px solid #505050; border-bottom: 0; margin-top: auto; }

/* dock */
.dock { position: relative; height: 65px; flex: none; display: flex; align-items: center; background: #533632; }
.app { position: relative; width: 66px; height: 65px; display: flex; justify-content: center; align-items: center; }
.app svg { width: 44px; height: 44px; }
.app .large { width: 48px; height: 48px; }
.app.run::after { content: ""; position: absolute; left: 30px; top: 58px; width: 6px; height: 6px; border-radius: 50%; background: #e95420; }
.current { width: 62px; height: 63px; margin: 2px 2px 0; border-radius: 3px; background: #725855; }
.current svg { margin-bottom: 2px; width: 46px; height: 46px; }
.current i { position: absolute; top: 56px; left: 15px; width: 6px; height: 6px; border-radius: 50%; background: #e95420; }
.current i:nth-of-type(2) { left: 24px; }
.current i:nth-of-type(3) { left: 32px; }
.current i:nth-of-type(4) { left: 41px; }
.ps { font: 700 16px "Open Sans", sans-serif; fill: #fff; }
.sk { font: 800 33px "Open Sans", sans-serif; fill: #fff; text-anchor: middle; }
.grid { position: absolute; left: 1871px; top: 17px; }
```
